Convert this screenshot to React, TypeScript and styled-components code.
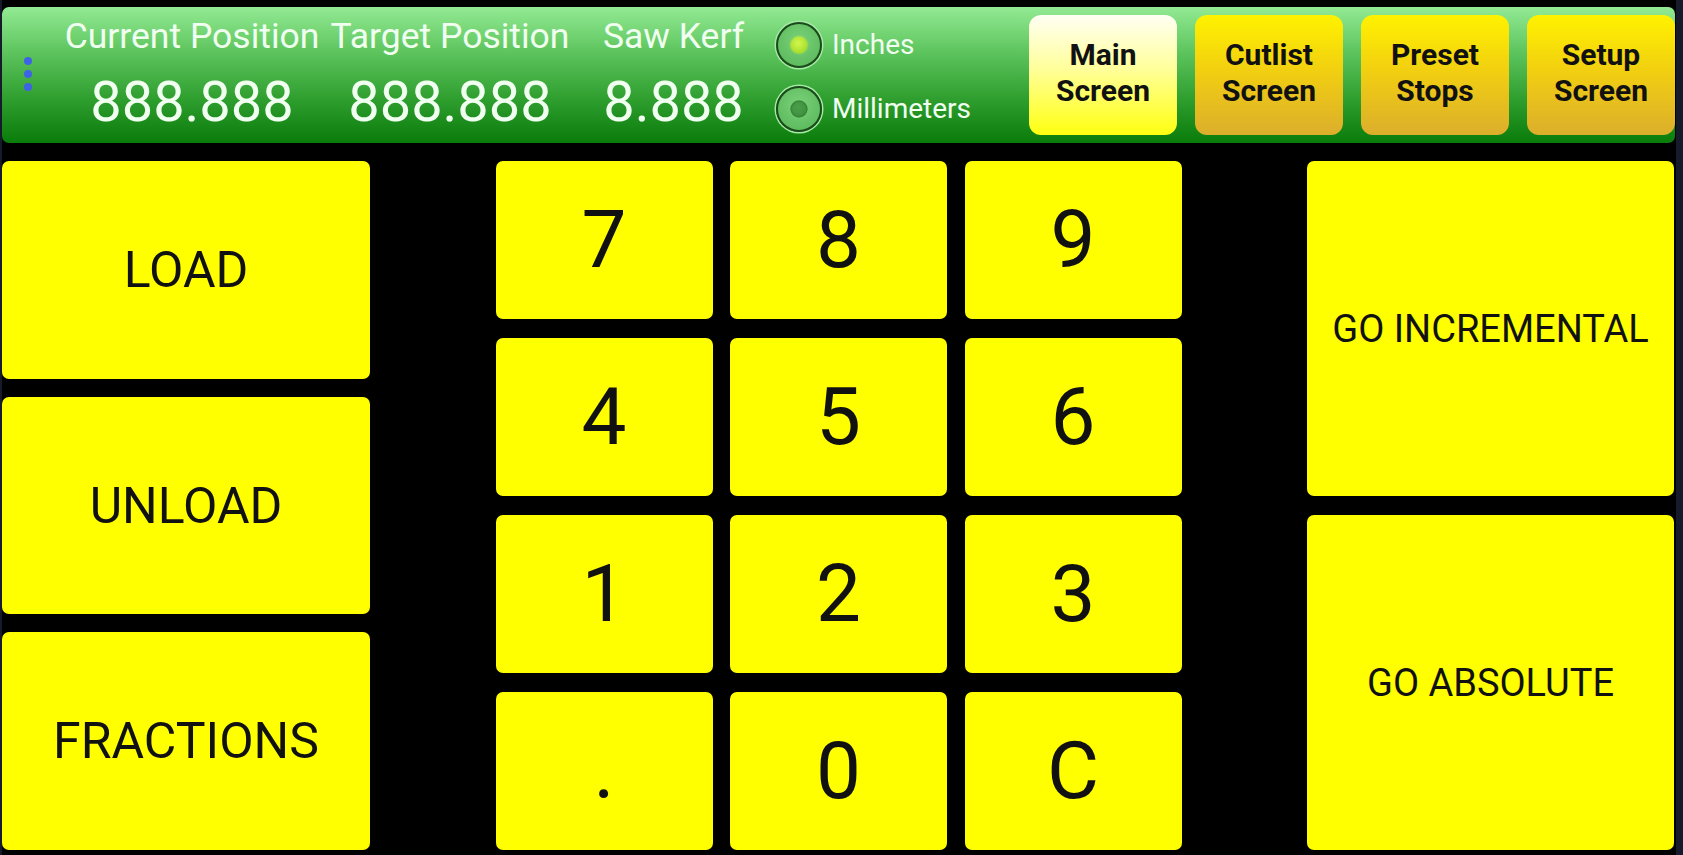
import styled, { createGlobalStyle } from 'styled-components';

const GlobalStyle = createGlobalStyle`
  html, body {
    margin: 0;
    padding: 0;
    background: #161a2a;
  }
  body {
    font-family: Roboto, "Liberation Sans", sans-serif;
  }
`;

const readouts = [
  { label: 'Current Position', value: '888.888', width: 252, offset: 0 },
  { label: 'Target Position', value: '888.888', width: 240, offset: 12 },
  { label: 'Saw Kerf', value: '8.888', width: 143, offset: 32 },
];

const screens = [
  { label: ['Main', 'Screen'], active: true },
  { label: ['Cutlist', 'Screen'], active: false },
  { label: ['Preset', 'Stops'], active: false },
  { label: ['Setup', 'Screen'], active: false },
];

const keys = ['7', '8', '9', '4', '5', '6', '1', '2', '3', '.', '0', 'C'];

const App = () => {
  return (
    <>
      <GlobalStyle />
      <Screen>
        <Header>
          <MenuDots>
            <span />
            <span />
            <span />
          </MenuDots>

          <Readouts>
            {readouts.map((r) => (
              <Readout key={r.label} $w={r.width} $ml={r.offset}>
                <ReadoutLabel>{r.label}</ReadoutLabel>
                <ReadoutValue>{r.value}</ReadoutValue>
              </Readout>
            ))}
          </Readouts>

          <Units>
            <RadioRow>
              <RadioDot $checked />
              <RadioLabel>Inches</RadioLabel>
            </RadioRow>
            <RadioRow>
              <RadioDot />
              <RadioLabel>Millimeters</RadioLabel>
            </RadioRow>
          </Units>

          <NavButtons>
            {screens.map((s) => (
              <NavButton key={s.label.join(' ')} $active={s.active}>
                {s.label[0]}
                <br />
                {s.label[1]}
              </NavButton>
            ))}
          </NavButtons>
        </Header>

        <Body>
          <SideColumn $gap={18}>
            <BigButton $size={50}>LOAD</BigButton>
            <BigButton $size={50}>UNLOAD</BigButton>
            <BigButton $size={50}>FRACTIONS</BigButton>
          </SideColumn>

          <Keypad>
            {keys.map((k) => (
              <Key key={k}>{k}</Key>
            ))}
          </Keypad>

          <SideColumn $gap={19}>
            <BigButton $size={38}>GO INCREMENTAL</BigButton>
            <BigButton $size={38}>GO ABSOLUTE</BigButton>
          </SideColumn>
        </Body>
      </Screen>
    </>
  );
};

export default App;

const Screen = styled.div`
  box-sizing: border-box;
  margin-left: 2px;
  width: 1674px;
  height: 855px;
  background: #000;
  padding-top: 7px;
  display: flex;
  flex-direction: column;
`;

const Header = styled.header`
  box-sizing: border-box;
  height: 136px;
  width: 1673px;
  flex: none;
  display: flex;
  align-items: stretch;
  padding: 8px 0 8px 22px;
  border-radius: 7px;
  background: linear-gradient(180deg, #93ea93 0%, #62c862 30%, #2e9e2e 68%, #0a7c0a 100%);
`;

const MenuDots = styled.div`
  width: 8px;
  display: flex;
  flex-direction: column;
  justify-content: center;
  gap: 5px;
  padding-bottom: 2px;

  span {
    width: 8px;
    height: 8px;
    border-radius: 50%;
    background: #3f63e6;
  }
`;

const Readouts = styled.div`
  display: flex;
  margin-left: 34px;
`;

const Readout = styled.div<{ $w: number; $ml: number }>`
  width: ${(p) => p.$w}px;
  margin-left: ${(p) => p.$ml}px;
  display: flex;
  flex-direction: column;
  align-items: center;
  color: #f0fff0;
  white-space: nowrap;
`;

const ReadoutLabel = styled.div`
  font-size: 35.5px;
  line-height: 40px;
  margin-top: 1px;
`;

const ReadoutValue = styled.div`
  font-size: 56px;
  line-height: 60px;
  margin-top: 16px;
`;

const Units = styled.div`
  margin-left: 31px;
  display: flex;
  flex-direction: column;
  gap: 18px;
  padding-top: 7px;
`;

const RadioRow = styled.div`
  display: flex;
  align-items: center;
  gap: 10px;
  height: 46px;
`;

const RadioDot = styled.span<{ $checked?: boolean }>`
  box-sizing: border-box;
  position: relative;
  width: 46px;
  height: 46px;
  border-radius: 50%;
  border: 2.5px solid #1b4a1b;
  box-shadow: 0 0 0 1.5px #a6e8a6;
  background: radial-gradient(circle at 50% 40%, #7ad27a, #56b456);

  &::after {
    content: '';
    position: absolute;
    left: 50%;
    top: 50%;
    width: 17px;
    height: 17px;
    transform: translate(-50%, -50%);
    border-radius: 50%;
    background: ${(p) =>
      p.$checked
        ? 'radial-gradient(circle at 45% 40%, #d2f650, #96d41a)'
        : 'radial-gradient(circle at 45% 40%, #4a9e4a, #3a8a3a)'};
    box-shadow: ${(p) => (p.$checked ? '0 0 2px #c8f040' : 'inset 0 0 2px #245a24')};
  }
`;

const RadioLabel = styled.span`
  color: #f0fff0;
  font-size: 28px;
  line-height: 32px;
`;

const NavButtons = styled.nav`
  margin-left: auto;
  display: flex;
  gap: 18px;
`;

const NavButton = styled.button<{ $active?: boolean }>`
  box-sizing: border-box;
  width: 148px;
  height: 120px;
  border: none;
  border-radius: 12px;
  padding: 0 0 4px;
  font-family: Roboto, "Liberation Sans", sans-serif;
  font-weight: 700;
  font-size: 30px;
  line-height: 36px;
  color: #111;
  background: ${(p) =>
    p.$active
      ? 'linear-gradient(180deg, #fffff4 0%, #ffff9a 45%, #ffff10 100%)'
      : 'linear-gradient(180deg, #fff200 0%, #f2d010 45%, #dcae2c 100%)'};
`;

const Body = styled.main`
  margin-top: 18px;
  height: 689px;
  width: 1672px;
  display: grid;
  grid-template-columns: 368px 686px 367px;
  justify-content: space-between;
`;

const SideColumn = styled.div<{ $gap: number }>`
  display: flex;
  flex-direction: column;
  gap: ${(p) => p.$gap}px;
`;

const BigButton = styled.button<{ $size: number }>`
  flex: 1;
  border: none;
  border-radius: 7px;
  background: #ffff00;
  color: #111;
  font-family: Roboto, "Liberation Sans", sans-serif;
  font-size: ${(p) => p.$size}px;
  padding: 0;
  white-space: nowrap;
`;

const Keypad = styled.div`
  display: grid;
  grid-template-columns: repeat(3, 217px);
  grid-template-rows: repeat(4, 1fr);
  column-gap: 17.5px;
  row-gap: 19px;
`;

const Key = styled.button`
  border: none;
  border-radius: 7px;
  background: #ffff00;
  color: #111;
  font-family: Roboto, "Liberation Sans", sans-serif;
  font-size: 80px;
  line-height: 1;
  padding: 0;
`;
